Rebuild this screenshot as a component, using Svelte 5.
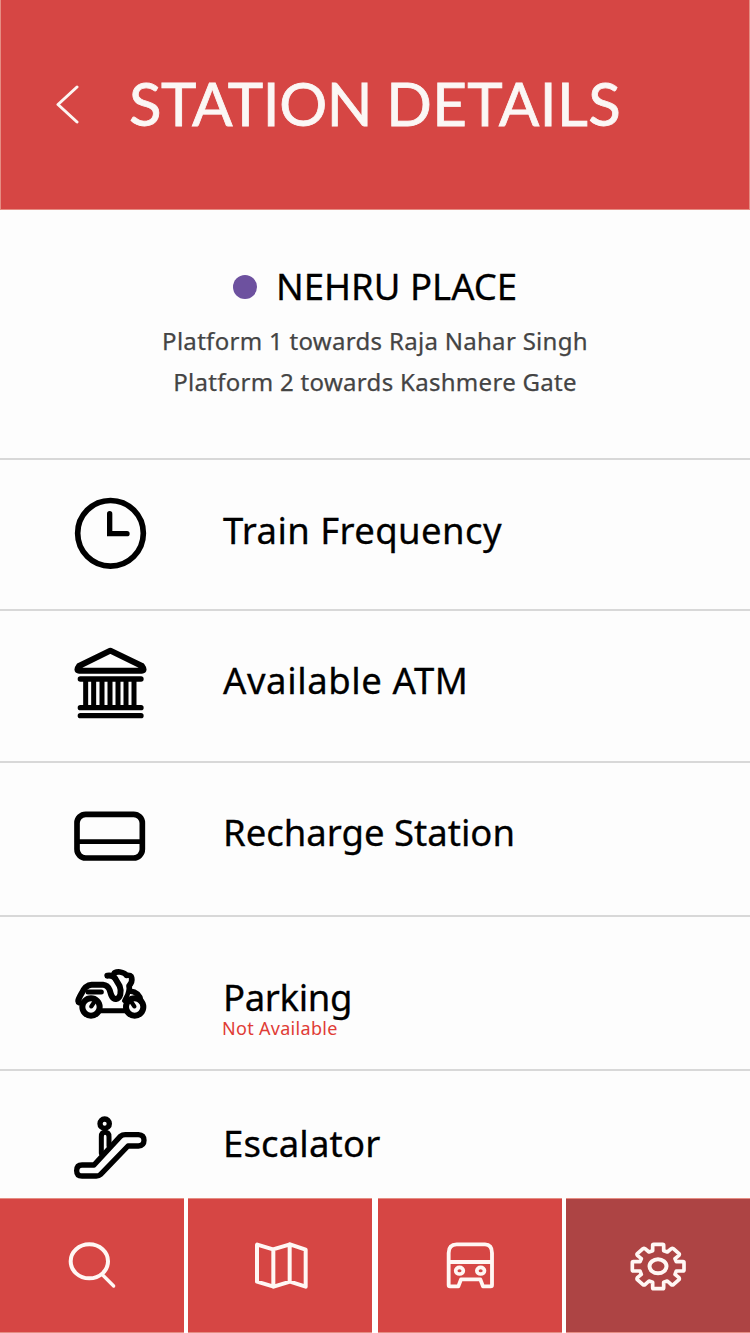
<script>
  const rows = [
    { icon: 'clock', label: 'Train Frequency', height: 151, iconTop: 20, textTop: 44, spacing: 0.4 },
    { icon: 'bank', label: 'Available ATM', height: 152, iconTop: 19, textTop: 43, spacing: 0.6 },
    { icon: 'card', label: 'Recharge Station', height: 154, iconTop: 27, textTop: 43, spacing: 0 },
    { icon: 'scooter', label: 'Parking', note: 'Not Available', height: 154, iconTop: 33, textTop: 54, spacing: -0.35 },
    { icon: 'escalator', label: 'Escalator', height: 127, iconTop: 29, textTop: 46, spacing: 0.15 }
  ];
</script>

<main class="screen">
  <header>
    <svg class="back" viewBox="0 0 24 40" aria-hidden="true"><path d="M22 3 L3 20.5 L22 38" /></svg>
    <h1><span>STATION</span> <span class="second">DETAILS</span></h1>
  </header>

  <section class="station">
    <div class="name"><i class="dot"></i><h2>NEHRU PLACE</h2></div>
    <p class="one">Platform 1 towards Raja Nahar Singh</p>
    <p class="two">Platform 2 towards Kashmere Gate</p>
  </section>

  <ul>
    {#each rows as row}
      <li style:height="{row.height}px">
        <svg viewBox="0 0 330 330" style:margin-top="{row.iconTop}px" aria-hidden="true">
          {#if row.icon === 'clock'}
            <circle cx="151.500" cy="160" r="98.500" stroke-width="17" />
            <path d="M149 101 V161 H201" stroke-width="16" stroke-linejoin="miter" />
          {:else if row.icon === 'bank'}
            <path d="M151 62 L57 108 Q47 121 58 122 H245 Q256 121 246 108 Z" stroke-width="18" />
            <path d="M61 147 H243 M61 233 H243 M61 257 H243" stroke-width="16" />
            <path d="M77 150 V232 M101 150 V232 M126 150 V232 M150 150 V232 M174 150 V232 M198 150 V232 M222 150 V232" stroke-width="15" stroke-linecap="butt" />
          {:else if row.icon === 'card'}
            <rect x="51" y="73" width="196" height="131" rx="26" stroke-width="17" />
            <path d="M52 155 H246" stroke-width="14.500" />
          {:else if row.icon === 'scooter'}
            <g stroke-width="18">
              <circle cx="93" cy="171" r="26" />
              <circle cx="224" cy="171" r="26" />
              <path d="M119 182 H198" stroke-width="15" />
              <path d="M102 157 L94 169 M215 157 L223 169" stroke-width="13" />
              <path d="M57 157 C51 155 58 142 65 130 Q76 105 95 104 H129 Q143 105 149 120 C154 139 158 148 168 147 C181 145 186 126 179 108 L166 86 Q159 75 142 77" />
              <path d="M84 126 H124" stroke-width="15" />
              <path d="M162 71 Q164 65 180 66 Q195 68 199 76 Q214 74 215 83 Q218 98 207 107 L209 123 Q239 126 243 154" stroke-width="17" />
              <path d="M207 118 Q204 135 193 152" stroke-width="14" />
            </g>
          {:else}
            <circle cx="134" cy="71" r="14" stroke-width="16" />
            <path d="M124 160 V110 Q124 97 135 97 Q147 97 147 110 V137" stroke-width="15" />
            <path d="M66 195 H102 L181 109 Q187 104 196 104 H235 Q252 105 252 121 Q252 137 235 138 H204 L122 223 Q117 228 109 228 H66 Q50 228 50 212 Q50 195 66 195 Z" stroke-width="16" />
          {/if}
        </svg>
        <div class="text" style:margin-top="{row.textTop}px">
          <span class="label" style:letter-spacing="{row.spacing}px">{row.label}</span>
          {#if row.note}<span class="note">{row.note}</span>{/if}
        </div>
      </li>
    {/each}
  </ul>

  <nav>
    <button aria-label="Search">
      <svg viewBox="0 0 552 402"><ellipse cx="268" cy="190" rx="56" ry="51" stroke-width="12" /><path d="M308 231 L341 264" stroke-width="10" /></svg>
    </button>
    <button aria-label="Map">
      <svg viewBox="0 0 552 402"><path d="M208 140 L255 154 L306 139 L353 155 V266 L306 251 L257 266 L207 251 V140 M256 154 V266 M305 139 V251" stroke-width="12" /></svg>
    </button>
    <button aria-label="Trains">
      <svg viewBox="0 0 552 402"><path d="M212 165 Q212 139 236 139 H321 Q342 139 342 165 V261 Q342 265 338 265 H315 L307 244 H249 L241 265 H216 Q212 265 212 261 Z M213 192 H341" stroke-width="11.500" /><ellipse cx="244.500" cy="218" rx="11.500" ry="10" stroke-width="11" /><ellipse cx="308" cy="218" rx="11.500" ry="10" stroke-width="11" /></svg>
    </button>
    <button class="active" aria-label="Settings">
      <svg viewBox="0 0 552 402">
        <ellipse cx="276" cy="205" rx="25.500" ry="21" stroke-width="12" />
        <path transform="translate(-1 1)" d="M261 140 Q261 138 264 138 H291 Q294 138 294 141 V157 L305 161 L317 151 Q320 149 323 151 L340 166 Q342 168 340 171 L328 181 L332 190 H352 Q355 190 355 193 V215 Q355 218 352 218 H332 L328 228 L340 238 Q342 241 340 244 L323 259 Q320 261 317 259 L305 248 L294 252 V268 Q294 271 291 271 H264 Q261 271 261 268 V252 L250 248 L238 259 Q235 261 232 259 L215 244 Q213 241 215 238 L227 228 L223 218 H203 Q200 218 200 215 V193 Q200 190 203 190 H223 L227 181 L215 171 Q213 168 215 166 L232 151 Q235 149 238 151 L250 161 L261 157 Z" stroke-width="11" />
      </svg>
    </button>
  </nav>
</main>

<style>
  :global(body) { margin: 0; background: #fdfdfd; }
  .screen { width: 750px; height: 1333px; display: flex; flex-direction: column; overflow: hidden; background: #fdfdfd; color: #000; font-family: "Noto Sans", sans-serif; }
  h1, h2, p, ul { margin: 0; padding: 0; font-weight: 400; white-space: nowrap; }
  svg { fill: none; stroke: #000; stroke-linecap: round; stroke-linejoin: round; }
  header { box-sizing: border-box; height: 210px; flex: none; background: #d64644; border: solid #e58d83; border-width: 0 1px 1px; display: flex; align-items: flex-start; padding-left: 54px; }
  .back { width: 24px; height: 40px; margin-top: 84px; stroke: #fcf6f3; stroke-width: 3; }
  h1 { color: #fbf7f5; font-family: Lato, sans-serif; font-size: 60px; line-height: 72px; margin: 67px 0 0 50px; letter-spacing: -.45px; word-spacing: -.7px; -webkit-text-stroke: .8px #fbf7f5; }
  .second { letter-spacing: .35px; }
  .station { box-sizing: border-box; height: 250px; flex: none; border-bottom: 2px solid #d8d8d8; padding-top: 51px; text-align: center; }
  .name { display: flex; align-items: center; height: 52px; padding-left: 233px; }
  .dot { width: 24px; height: 24px; border-radius: 50%; background: #6d519f; margin-right: 19px; }
  h2 { font-size: 36.500px; line-height: 50px; margin-bottom: 2px; -webkit-text-stroke: .3px #000; }
  p { color: #444; font-size: 24px; line-height: 41px; letter-spacing: .3px; -webkit-text-stroke: .25px #444; }
  .one { margin-top: 7px; }
  ul { list-style: none; flex: none; }
  li { box-sizing: border-box; display: flex; align-items: flex-start; padding-left: 60px; border-bottom: 2px solid #d8d8d8; }
  li:last-child { border-bottom: 0; }
  li svg { width: 110px; height: 110px; flex: none; }
  .text { display: flex; flex-direction: column; margin-left: 52px; }
  .label { font-size: 36.500px; line-height: 52px; margin-left: 1px; -webkit-text-stroke: .3px #000; }
  .note { color: #e03c35; font-size: 18px; line-height: 20px; margin: -5px 0 0; letter-spacing: .3px; }
  nav { height: 135px; display: grid; grid-template-columns: 184px 184px 186px 184px; column-gap: 4px; background: #fff; }
  button { box-sizing: border-box; width: 184px; height: 135px; padding: 0; justify-self: end; border: 1px solid #e58d83; border-width: 1px 0; background: #d64644; }
  button.active { background: #ad4444; }
  nav svg { display: block; width: 184px; height: 134px; margin-top: -1px; stroke: #fff7f4; }
</style>
